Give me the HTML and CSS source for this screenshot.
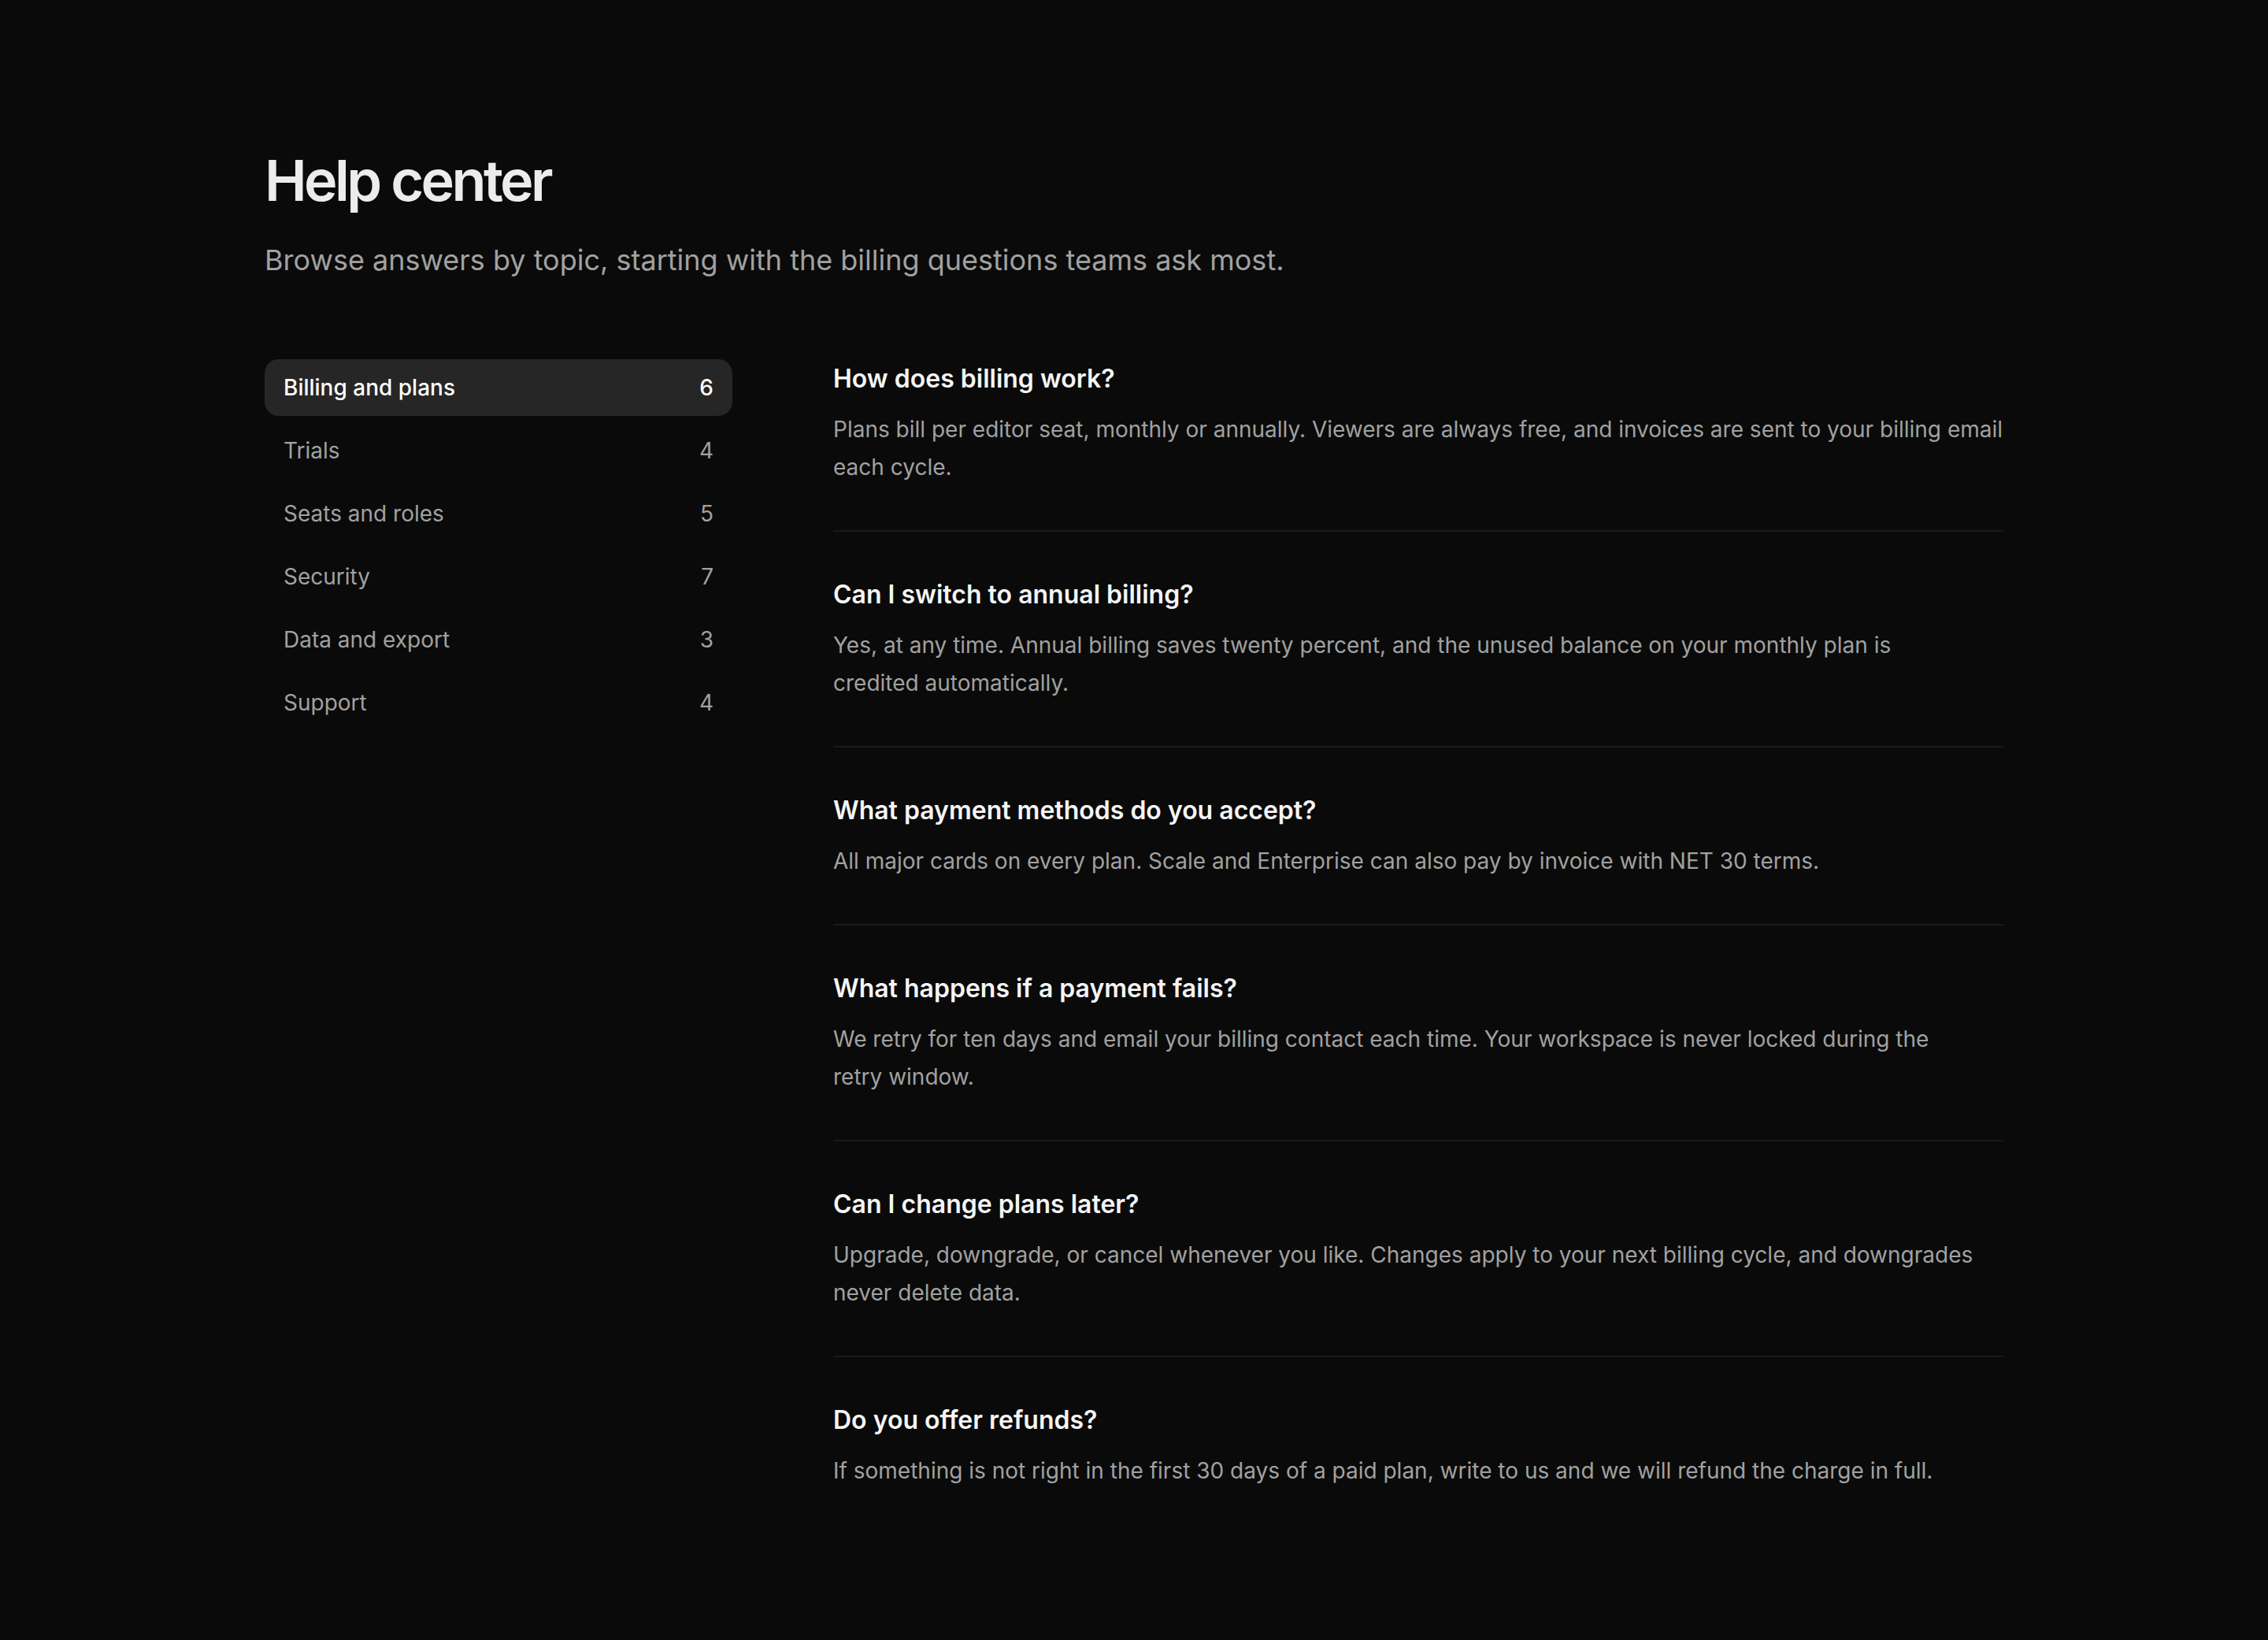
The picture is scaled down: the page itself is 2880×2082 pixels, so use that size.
FILE: index.html
```
<!DOCTYPE html>
<html lang="en">
<head>
<meta charset="utf-8">
<title>Help center</title>
<link rel="stylesheet" href="styles.css">
</head>
<body>
<div class="page">
  <header class="head">
    <h1 class="title">Help center</h1>
    <p class="subtitle">Browse answers by topic, starting with the billing questions teams ask most.</p>
  </header>
  <div class="layout">
    <nav class="topics">
      <a class="topic active"><span>Billing and plans</span><span class="count">6</span></a>
      <a class="topic"><span>Trials</span><span class="count">4</span></a>
      <a class="topic"><span>Seats and roles</span><span class="count">5</span></a>
      <a class="topic"><span>Security</span><span class="count">7</span></a>
      <a class="topic"><span>Data and export</span><span class="count">3</span></a>
      <a class="topic"><span>Support</span><span class="count">4</span></a>
    </nav>
    <main class="faq">
      <section class="item">
        <h2 class="q">How does billing work?</h2>
        <p class="a">Plans bill per editor seat, monthly or annually. Viewers are always free, and invoices are sent to your billing email each cycle.</p>
      </section>
      <section class="item">
        <h2 class="q">Can I switch to annual billing?</h2>
        <p class="a">Yes, at any time. Annual billing saves twenty percent, and the unused balance on your monthly plan is credited automatically.</p>
      </section>
      <section class="item">
        <h2 class="q">What payment methods do you accept?</h2>
        <p class="a">All major cards on every plan. Scale and Enterprise can also pay by invoice with NET 30 terms.</p>
      </section>
      <section class="item">
        <h2 class="q">What happens if a payment fails?</h2>
        <p class="a">We retry for ten days and email your billing contact each time. Your workspace is never locked during the retry window.</p>
      </section>
      <section class="item">
        <h2 class="q">Can I change plans later?</h2>
        <p class="a">Upgrade, downgrade, or cancel whenever you like. Changes apply to your next billing cycle, and downgrades never delete data.</p>
      </section>
      <section class="item">
        <h2 class="q">Do you offer refunds?</h2>
        <p class="a">If something is not right in the first 30 days of a paid plan, write to us and we will refund the charge in full.</p>
      </section>
    </main>
  </div>
</div>
</body>
</html>
```
FILE: styles.css
```
html, body {
  margin: 0;
  padding: 0;
  background: #0a0a0a;
}
body {
  font-family: Inter, "Noto Sans", sans-serif;
  color: #ededed;
  min-height: 2082px;
}
.page {
  width: 2208px;
  margin: 0 auto;
  padding: 189px 0 120px;
}
.head {
  margin: 0 0 99px;
}
.title {
  margin: 0;
  font-size: 72px;
  line-height: 80px;
  font-weight: 600;
  letter-spacing: -0.05em;
  color: #ececec;
}
.subtitle {
  margin: 34px 0 0;
  font-size: 36px;
  line-height: 54px;
  color: #a1a1a1;
}
.layout {
  display: grid;
  grid-template-columns: 594px 1fr;
  column-gap: 128px;
  align-items: start;
}
.topics {
  display: flex;
  flex-direction: column;
  gap: 8px;
}
.topic {
  display: flex;
  align-items: center;
  justify-content: space-between;
  height: 72px;
  padding: 0 24px;
  border-radius: 18px;
  font-size: 28px;
  color: #a1a1a1;
}
.topic.active {
  background: #262626;
  color: #ffffff;
  font-weight: 500;
}
.faq {
  display: flex;
  flex-direction: column;
  padding-top: 1px;
}
.item {
  padding: 56px 0;
  border-bottom: 2px solid #1a1a1a;
}
.item:first-child {
  padding-top: 0;
}
.item:last-child {
  border-bottom: 0;
}
.q {
  margin: 0;
  font-size: 32px;
  line-height: 48px;
  font-weight: 600;
  color: #f5f5f5;
}
.a {
  margin: 16px 0 0;
  font-size: 28px;
  line-height: 48px;
  color: #a1a1a1;
  text-wrap: pretty;
}
```
